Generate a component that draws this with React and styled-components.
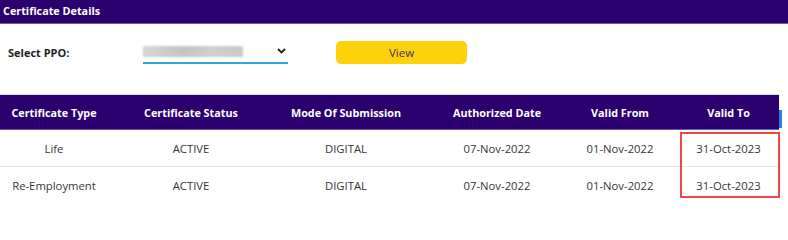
import React from 'react'
import styled, { createGlobalStyle } from 'styled-components'

const colors = {
  purple: '#2b006e',
  purpleLine: '#6e56a6',
  yellow: '#fdd20a',
  text: '#363636',
  divider: '#e6e6ec',
  accent: '#2aa6e0',
  mark: '#f04646',
}

const GlobalStyle = createGlobalStyle`
  body {
    margin: 0;
    background: #fff;
    font-family: "Open Sans", "Noto Sans", sans-serif;
    color: ${colors.text};
  }
`

const Page = styled.div`
  width: 788px;
  height: 207px;
  overflow: hidden;
`

const TitleBar = styled.div`
  height: 23px;
  background-color: ${colors.purple};
  border-bottom: 1px solid ${colors.purpleLine};
  color: #fff;
  font-size: 10.8px;
  font-weight: 700;
  line-height: 22px;
  padding-left: 3px;
`

const FilterRow = styled.div`
  display: flex;
  align-items: center;
  height: 50px;
  padding: 3px 0 0 8px;
  margin-bottom: 17px;
`

const Label = styled.label`
  width: 135px;
  font-size: 11px;
  font-weight: 700;
  color: #222;
`

const Select = styled.div`
  position: relative;
  width: 145px;
  height: 18px;
  border-bottom: 2px solid ${colors.accent};
  margin-top: 3px;
`

const Blurred = styled.div`
  width: 100px;
  height: 11px;
  margin-top: 2px;
  background: linear-gradient(90deg, #d6d6d6, #c4c4c4 40%, #cfcfcf 70%, #c9c9c9);
  filter: blur(1px);
`

const Chevron = styled.svg`
  position: absolute;
  right: 2px;
  top: 4px;
`

const ViewButton = styled.button`
  margin-left: 48px;
  width: 131px;
  height: 23px;
  border: none;
  border-radius: 5px;
  background-color: ${colors.yellow};
  color: #4a2a6e;
  font-family: inherit;
  font-size: 11.5px;
  padding: 0;
`

const TableWrap = styled.div`
  position: relative;
  width: 779px;
  border-top: 1px solid #dcdce4;
`

const Table = styled.table`
  width: 779px;
  border-collapse: collapse;
  table-layout: fixed;
  font-size: 11.3px;
`

const Th = styled.th`
  height: 34px;
  padding: 0;
  padding-left: ${p => p.$shift || 0}px;
  background-color: ${colors.purple};
  border-bottom: 1px solid ${colors.purpleLine};
  color: #fff;
  font-size: 10.8px;
  font-weight: 700;
  text-align: center;
`

const Row = styled.tr`
  & + & td {
    border-top: 1px solid ${colors.divider};
  }
`

const Td = styled.td`
  height: 36px;
  padding: 0;
  padding-left: ${p => p.$shift || 0}px;
  text-align: center;
  color: ${colors.text};
`

const Highlight = styled.div`
  position: absolute;
  left: 680px;
  top: 37px;
  width: 96px;
  height: 62px;
  border: 2px solid ${colors.mark};
  pointer-events: none;
`

const ScrollEdge = styled.div`
  position: absolute;
  left: 779px;
  top: 15px;
  width: 3px;
  height: 18px;
  background: #2f7fd8;
`

const columns = [
  { title: 'Certificate Type', key: 'type', width: 108 },
  { title: 'Certificate Status', key: 'status', width: 166 },
  { title: 'Mode Of Submission', key: 'mode', width: 144 },
  { title: 'Authorized Date', key: 'authorized', width: 158 },
  { title: 'Valid From', key: 'from', width: 88 },
  { title: 'Valid To', key: 'to', width: 115, shift: 14 },
]

const rows = [
  { type: 'Life', status: 'ACTIVE', mode: 'DIGITAL', authorized: '07-Nov-2022', from: '01-Nov-2022', to: '31-Oct-2023' },
  { type: 'Re-Employment', status: 'ACTIVE', mode: 'DIGITAL', authorized: '07-Nov-2022', from: '01-Nov-2022', to: '31-Oct-2023' },
]

const App = () => {
  return <Page>
    <GlobalStyle />
    <TitleBar>Certificate Details</TitleBar>
    <FilterRow>
      <Label>Select PPO:</Label>
      <Select>
        <Blurred />
        <Chevron width="9" height="6" viewBox="0 0 9 6">
          <path d="M1 1l3.5 3.5L8 1" fill="none" stroke="#222" strokeWidth="1.8" />
        </Chevron>
      </Select>
      <ViewButton>View</ViewButton>
    </FilterRow>
    <TableWrap>
      <Table>
        <colgroup>
          {columns.map(c => <col key={c.key} style={{ width: c.width }} />)}
        </colgroup>
        <thead>
          <tr>
            {columns.map(c => <Th key={c.key} $shift={c.shift}>{c.title}</Th>)}
          </tr>
        </thead>
        <tbody>
          {rows.map((r, i) => <Row key={i}>
            {columns.map(c => <Td key={c.key} $shift={c.shift}>{r[c.key]}</Td>)}
          </Row>)}
        </tbody>
      </Table>
      <ScrollEdge />
      <Highlight />
    </TableWrap>
  </Page>
}

export default App
